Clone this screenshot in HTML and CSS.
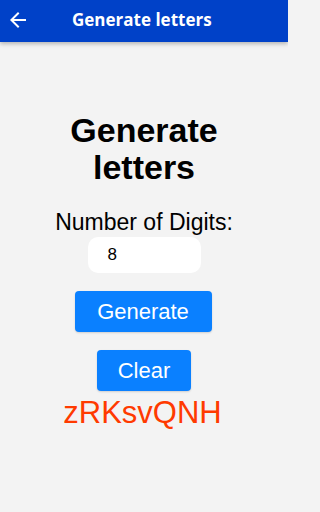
FILE: index.html
```html
<!DOCTYPE html>
<html>
<head>
<meta charset="utf-8">
<link rel="stylesheet" href="styles.css">
</head>
<body>
<header class="appbar">
  <svg class="back" viewBox="0 0 24 24" width="24" height="24"><path d="M20 11H7.83l5.59-5.59L12 4l-8 8 8 8 1.41-1.41L7.83 13H20v-2z" fill="#fff"/></svg>
  <div class="appbar-title">Generate letters</div>
</header>
<main class="content">
  <h1 class="heading">Generate<br>letters</h1>
  <div class="label">Number of Digits:</div>
  <div class="input">8</div>
  <button class="btn btn-generate">Generate</button>
  <button class="btn btn-clear">Clear</button>
  <div class="result">zRKsvQNH</div>
</main>
</body>
</html>
```
FILE: styles.css
```css
html, body { margin: 0; padding: 0; background: #f3f3f3; }
body {
  width: 288px;
  height: 512px;
  font-family: "Liberation Sans", Arial, sans-serif;
  overflow: hidden;
}
.appbar {
  height: 42px;
  background: #0041c8;
  display: flex;
  align-items: center;
  padding-left: 6px;
  box-shadow: 0 2px 4px rgba(0,0,0,0.25);
  position: relative;
}
.back { display: block; margin-top: -3px; }
.appbar-title {
  color: #fff;
  font-family: "Open Sans", sans-serif;
  font-weight: 700;
  font-size: 17px;
  margin-left: 42px;
  margin-top: -3px;
}
.content {
  display: flex;
  flex-direction: column;
  align-items: center;
  padding-top: 70px;
}
.heading {
  margin: 0;
  font-size: 34px;
  font-weight: 700;
  line-height: 37px;
  text-align: center;
  color: #000;
}
.label {
  margin-top: 23px;
  font-size: 23px;
  line-height: 26px;
  color: #000;
}
.input {
  box-sizing: border-box;
  width: 113px;
  height: 36px;
  background: #fff;
  border-radius: 10px;
  margin-top: 2px;
  padding-left: 20px;
  font-size: 17px;
  line-height: 36px;
  color: #000;
}
.btn {
  border: none;
  background: #0a80ff;
  color: #fff;
  font-family: "Liberation Sans", Arial, sans-serif;
  font-size: 22px;
  border-radius: 4px;
  height: 41px;
  box-shadow: 0 1px 2px rgba(0,0,0,0.15);
}
.btn-generate { margin-top: 18px; width: 137px; margin-left: -2px; }
.btn-clear { margin-top: 18px; width: 94px; }
.result {
  color: #ff3a00;
  font-size: 31px;
  line-height: 34px;
  margin-top: 5px;
  margin-left: -3px;
}
```
